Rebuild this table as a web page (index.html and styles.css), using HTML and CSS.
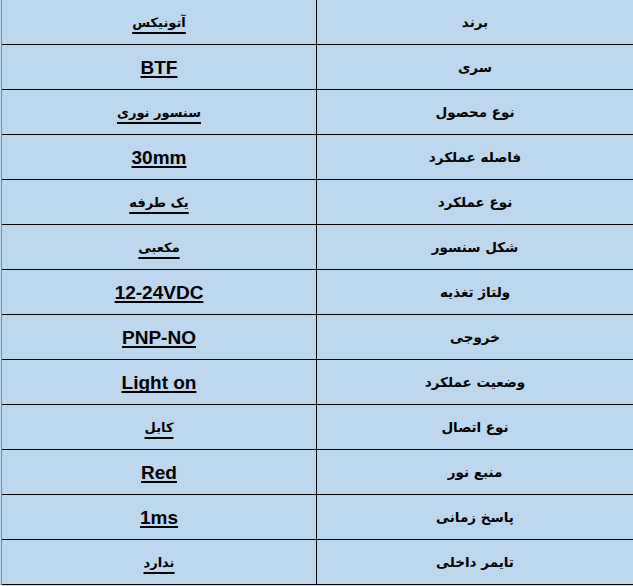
FILE: index.html
```html
<!DOCTYPE html>
<html lang="fa">
<head>
<meta charset="utf-8">
<link rel="stylesheet" href="styles.css">
</head>
<body>
<div class="spec" dir="rtl">
  <div class="row"><div class="label">برند</div><div class="value fa">آتونیکس</div></div>
  <div class="row"><div class="label">سری</div><div class="value">BTF</div></div>
  <div class="row"><div class="label">نوع محصول</div><div class="value fa">سنسور نوری</div></div>
  <div class="row"><div class="label">فاصله عملکرد</div><div class="value">30mm</div></div>
  <div class="row"><div class="label">نوع عملکرد</div><div class="value fa">یک طرفه</div></div>
  <div class="row"><div class="label">شکل سنسور</div><div class="value fa">مکعبی</div></div>
  <div class="row"><div class="label">ولتاژ تغذیه</div><div class="value">12-24VDC</div></div>
  <div class="row"><div class="label">خروجی</div><div class="value">PNP-NO</div></div>
  <div class="row"><div class="label">وضعیت عملکرد</div><div class="value">Light on</div></div>
  <div class="row"><div class="label">نوع اتصال</div><div class="value fa">کابل</div></div>
  <div class="row"><div class="label">منبع نور</div><div class="value">Red</div></div>
  <div class="row"><div class="label">پاسخ زمانی</div><div class="value">1ms</div></div>
  <div class="row"><div class="label">تایمر داخلی</div><div class="value fa">ندارد</div></div>
</div>
</body>
</html>
```

FILE: styles.css
```css
html, body {
  margin: 0;
  padding: 0;
  background: #bdd7ee;
}
.spec {
  margin-left: 1px;
  width: 631px;
  border-left: 1px solid #7d8fa0;
  background: #bdd7ee;
  color: #000;
}
.row {
  display: grid;
  grid-template-columns: 317px 314px;
  height: 45px;
  box-sizing: border-box;
  border-bottom: 1px solid #000;
}
.label, .value {
  display: flex;
  align-items: center;
  justify-content: center;
  font-weight: bold;
}
.label {
  box-sizing: border-box;
  border-left: 1px solid #000;
  font-family: "DejaVu Sans", sans-serif;
  font-size: 13.5px;
}
.value {
  font-family: "Liberation Sans", Arial, sans-serif;
  font-size: 19px;
  padding-top: 1px;
  text-decoration: underline;
  text-decoration-thickness: 2px;
  text-underline-offset: 2px;
  text-decoration-skip-ink: none;
}
.value.fa {
  font-family: "DejaVu Sans", sans-serif;
  font-size: 13px;
  text-underline-offset: 5px;
}
```
